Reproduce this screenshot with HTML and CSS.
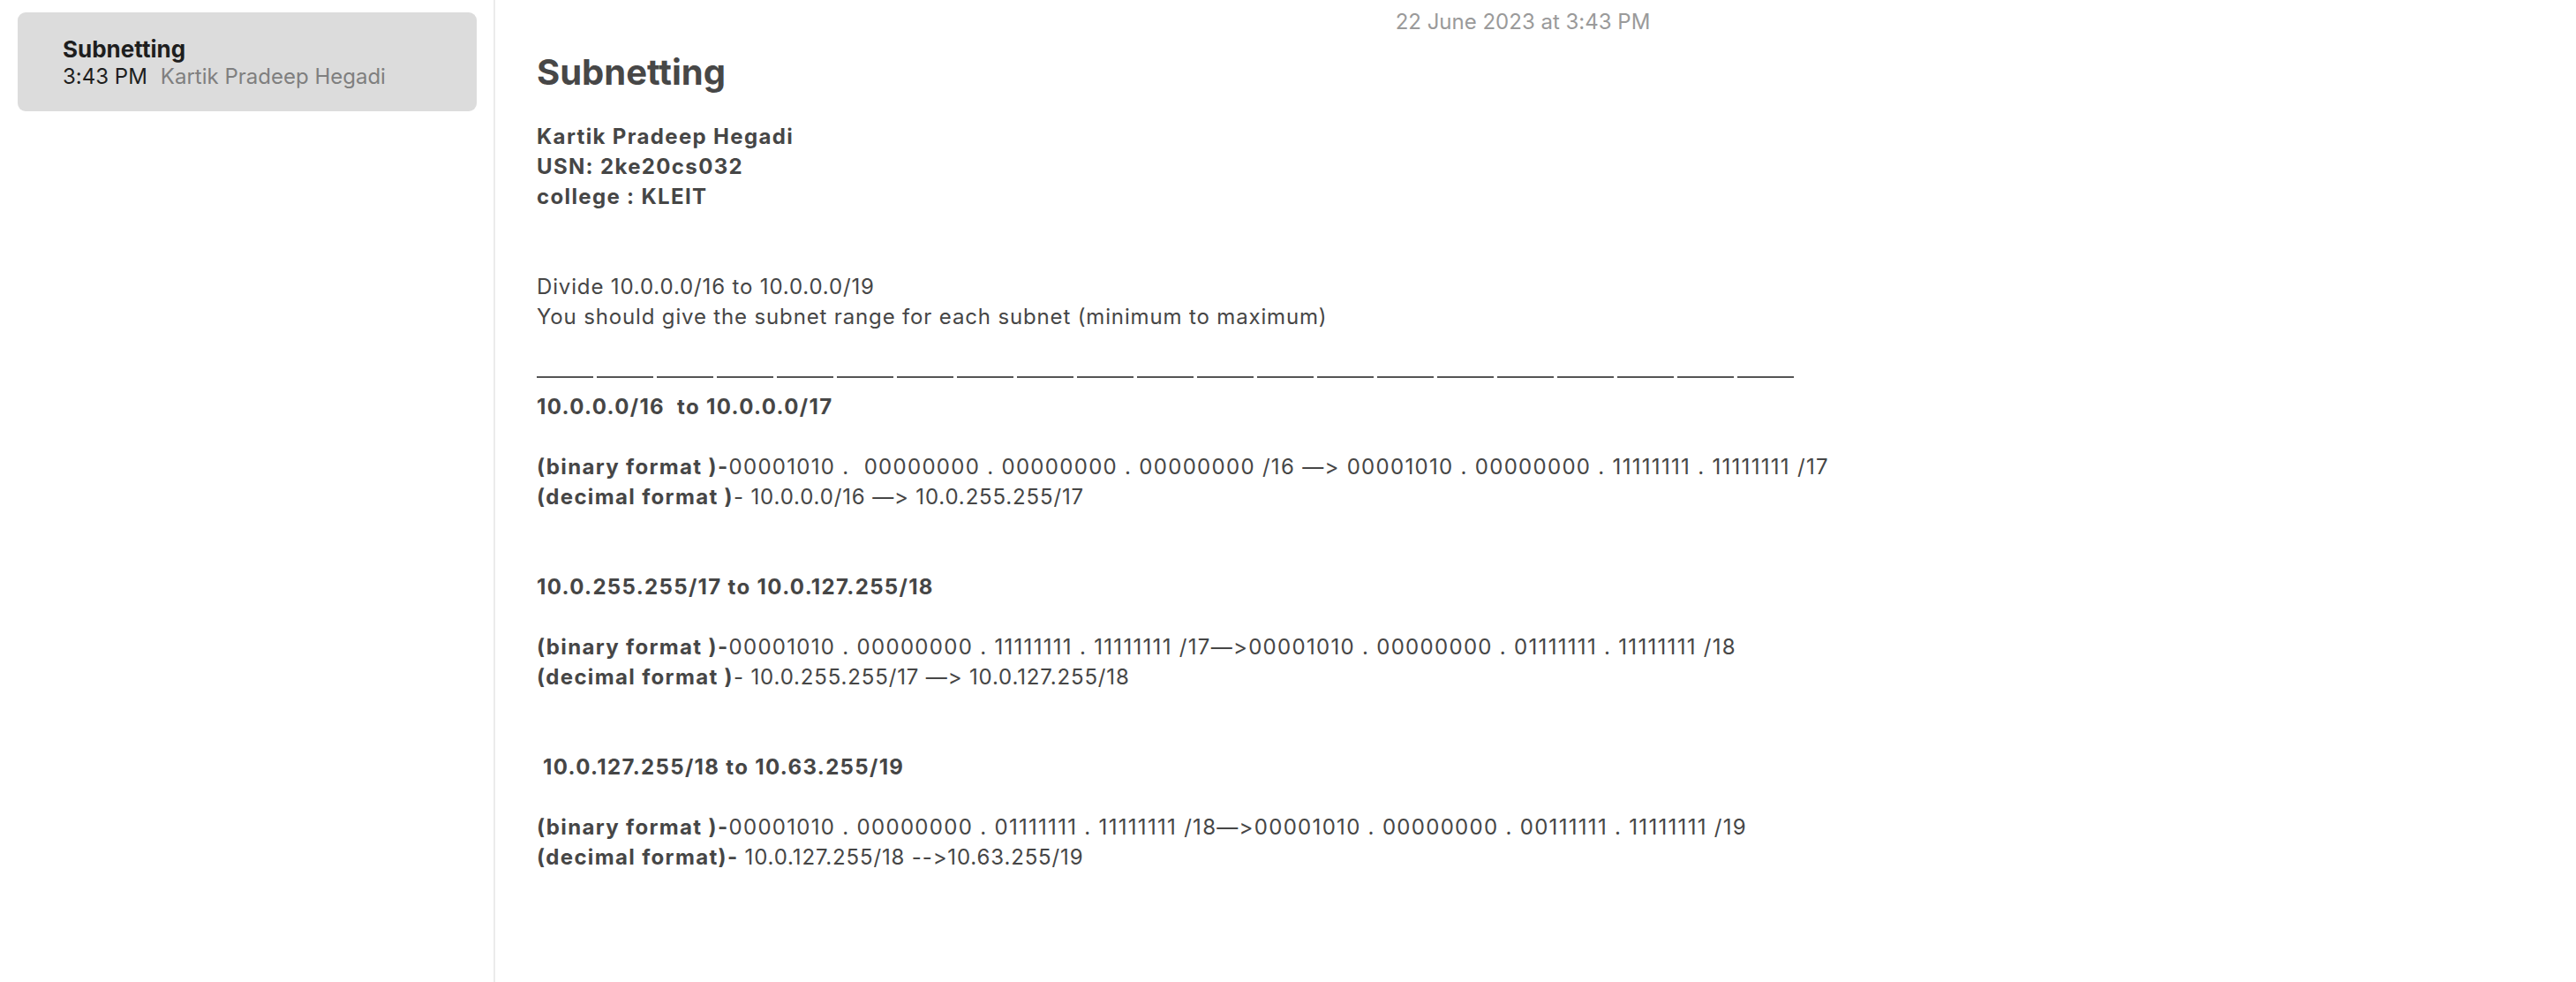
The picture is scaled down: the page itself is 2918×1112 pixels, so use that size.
FILE: index.html
```html
<!DOCTYPE html>
<html lang="en">
<head>
<meta charset="utf-8">
<title>Subnetting</title>
<link rel="stylesheet" href="styles.css">
</head>
<body>
<div class="app">
  <aside class="sidebar">
    <div class="note-card">
      <div class="note-title">Subnetting</div>
      <div class="note-meta"><span class="note-time">3:43 PM</span><span class="note-author">Kartik Pradeep Hegadi</span></div>
    </div>
  </aside>
  <main class="editor">
    <div class="note-date">22 June 2023 at 3:43 PM</div>
    <h1 class="doc-title">Subnetting</h1>
    <div class="doc-body">
      <div class="line b">Kartik Pradeep Hegadi</div>
      <div class="line b">USN: 2ke20cs032</div>
      <div class="line b">college : KLEIT</div>
      <div class="line empty"></div>
      <div class="line empty"></div>
      <div class="line">Divide 10.0.0.0/16 to 10.0.0.0/19</div>
      <div class="line">You should give the subnet range for each subnet (minimum to maximum)</div>
      <div class="line empty"></div>
      <div class="line rule-line"><span class="rule" aria-label="divider"></span></div>
      <div class="line b">10.0.0.0/16  to 10.0.0.0/17</div>
      <div class="line empty"></div>
      <div class="line"><b>(binary format )-</b><span class="bits">00001010 .  00000000 . 00000000 . 00000000 /16 —&gt; 00001010 . 00000000 . 11111111 . 11111111 /17</span></div>
      <div class="line"><b>(decimal format )</b>- 10.0.0.0/16 —&gt; 10.0.255.255/17</div>
      <div class="line empty"></div>
      <div class="line empty"></div>
      <div class="line b">10.0.255.255/17 to 10.0.127.255/18</div>
      <div class="line empty"></div>
      <div class="line"><b>(binary format )-</b><span class="bits">00001010 . 00000000 . 11111111 . 11111111 /17—&gt;00001010 . 00000000 . 01111111 . 11111111 /18</span></div>
      <div class="line"><b>(decimal format )</b>- 10.0.255.255/17 —&gt; 10.0.127.255/18</div>
      <div class="line empty"></div>
      <div class="line empty"></div>
      <div class="line b"> 10.0.127.255/18 to 10.63.255/19</div>
      <div class="line empty"></div>
      <div class="line"><b>(binary format )-</b><span class="bits">00001010 . 00000000 . 01111111 . 11111111 /18—&gt;00001010 . 00000000 . 00111111 . 11111111 /19</span></div>
      <div class="line"><b>(decimal format)- </b>10.0.127.255/18 --&gt;10.63.255/19</div>
    </div>
  </main>
</div>
</body>
</html>
```
FILE: styles.css
```css
html, body {
  margin: 0;
  padding: 0;
  background: #ffffff;
}

body {
  font-family: "Inter", "Noto Sans", "Liberation Sans", sans-serif;
  color: #464646;
  -webkit-font-smoothing: antialiased;
  font-variant-ligatures: none;
  font-feature-settings: "calt" 0, "liga" 0;
}

.app {
  display: flex;
  height: 1112px;
  overflow: hidden;
}

/* ---------- sidebar ---------- */
.sidebar {
  box-sizing: border-box;
  width: 561px;
  flex: 0 0 561px;
  border-right: 2px solid #ebebeb;
  padding: 14px 19px 0 20px;
}

.note-card {
  height: 112px;
  box-sizing: border-box;
  background: #dcdcdc;
  border-radius: 9px;
  padding: 26px 0 0 51px;
  display: flex;
  flex-direction: column;
}

.note-title {
  font-size: 26px;
  line-height: 31px;
  font-weight: 700;
  color: #1e1e1e;
}

.note-meta {
  font-size: 24px;
  line-height: 31px;
  display: flex;
  gap: 15px;
  white-space: nowrap;
}

.note-time {
  color: #1e1e1e;
}

.note-author {
  color: #7f7f7f;
}

/* ---------- editor ---------- */
.editor {
  flex: 1;
  padding: 8px 0 0 47px;
  min-width: 0;
}

.note-date {
  font-size: 24px;
  line-height: 34px;
  color: #9a9a9a;
  text-align: center;
  padding-right: 76px;
}

.doc-title {
  margin: 16px 0 0 0;
  font-size: 40px;
  line-height: 48px;
  font-weight: 700;
  color: #474747;
}

.doc-body {
  margin-top: 32px;
  font-size: 24px;
  line-height: 34px;
  letter-spacing: 0.85px;
}

.line {
  height: 34px;
  white-space: pre;
}

.line.b,
.line b {
  font-weight: 700;
  letter-spacing: 1.35px;
}

.bits {
  letter-spacing: 1.3px;
}

.rule-line {
  display: flex;
  align-items: flex-start;
}

.rule {
  display: block;
  margin-top: 16px;
  width: 1428px;
  height: 2px;
  background: repeating-linear-gradient(90deg, #555555 0, #555555 64px, transparent 64px, transparent 68px);
}
```
